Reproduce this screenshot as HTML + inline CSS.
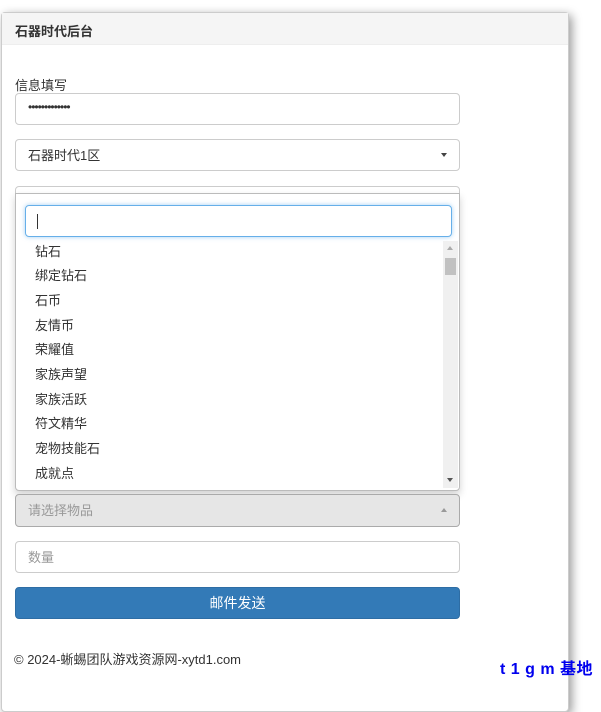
<!DOCTYPE html>
<html><head><meta charset="utf-8"><style>
*{box-sizing:border-box;margin:0;padding:0}
body{width:601px;height:680px;overflow:hidden;background:#fff;font-family:"Liberation Sans","Noto Sans CJK SC",sans-serif;font-size:13px;color:#333;position:relative}
.panel{position:absolute;left:1px;top:12px;width:568px;height:700px;border:1px solid #ccc;border-radius:4px;box-shadow:3px 3px 10px rgba(0,0,0,.4);background:#fff}
.hd{height:32px;background:#f5f5f5;border-bottom:1px solid #eee;padding:8px 13px;font-weight:bold;font-size:13px;color:#333}
.abs{position:absolute;white-space:nowrap}
.box{position:absolute;left:15px;width:445px;height:32px;border:1px solid #ccc;border-radius:4px;background:#fff;padding:5px 12px;font-size:13px}
.caret{position:absolute;right:12px;top:13px;width:0;height:0;border-left:3px solid transparent;border-right:3px solid transparent;border-top:4px solid #444}
.dd{position:absolute;left:15px;top:193px;width:445px;height:298px;border:1px solid #bbb;border-radius:0 0 4px 4px;background:#fff;box-shadow:0 4px 8px rgba(0,0,0,.18)}
.srch{position:absolute;left:9px;top:11px;width:427px;height:32px;border:1px solid #66afe9;border-radius:4px;box-shadow:0 0 5px rgba(102,175,233,.6)}
.srch i{position:absolute;left:11px;top:8px;width:1px;height:15px;background:#333}
.li{position:absolute;left:19px;font-size:13px;color:#333}
.sb{position:absolute;left:427px;top:47px;width:15px;height:247px;background:#f0f0f0}
</style></head><body>
<div class="panel"><div class="hd">石器时代后台</div></div>
<div class="abs" style="left:15px;top:75px;font-size:13px">信息填写</div>
<div class="box" style="top:93px;letter-spacing:-1px;font-size:12px;padding-top:6px">•••••••••••••</div>
<div class="box" style="top:139px">石器时代1区<span class="caret"></span></div>
<div class="box" style="top:186px"></div>
<div class="abs" style="left:15px;top:340px;width:445px;height:31px;border-left:1px solid #555;border-right:1px solid #555"></div>
<div class="abs" style="left:15px;top:400px;width:445px;height:31px;border-left:1px solid #bbb;border-right:1px solid #bbb"></div>
<div class="dd">
<div class="srch"><i></i></div>
<div class="li" style="top:47px">钻石</div>
<div class="li" style="top:71px">绑定钻石</div>
<div class="li" style="top:96px">石币</div>
<div class="li" style="top:121px">友情币</div>
<div class="li" style="top:145px">荣耀值</div>
<div class="li" style="top:170px">家族声望</div>
<div class="li" style="top:195px">家族活跃</div>
<div class="li" style="top:219px">符文精华</div>
<div class="li" style="top:244px">宠物技能石</div>
<div class="li" style="top:269px">成就点</div>
<div class="sb">
<div style="position:absolute;left:4px;top:5px;border-left:3px solid transparent;border-right:3px solid transparent;border-bottom:4px solid #aaa"></div>
<div style="position:absolute;left:2px;top:17px;width:11px;height:17px;background:#c1c1c1"></div>
<div style="position:absolute;left:4px;bottom:6px;border-left:3px solid transparent;border-right:3px solid transparent;border-top:4px solid #555"></div>
</div>
</div>
<div class="box" style="top:494px;background:#e6e6e6;border-color:#aaa;color:#999;height:33px">请选择物品<span class="caret" style="border-top:0;border-bottom:4px solid #999"></span></div>
<div class="box" style="top:541px;color:#999">数量</div>
<div class="box" style="top:587px;background:#337ab7;border-color:#2e6da4;color:#fff;text-align:center;font-size:14px;padding-top:5px">邮件发送</div>
<div class="abs" style="left:14px;top:649px;font-size:13px">© 2024-蜥蜴团队游戏资源网-xytd1.com</div>
<div class="abs" style="left:500px;top:655px;font-size:16px;font-weight:bold;color:#0000ee;letter-spacing:0.5px">t 1 g m 基地</div>
</body></html>
